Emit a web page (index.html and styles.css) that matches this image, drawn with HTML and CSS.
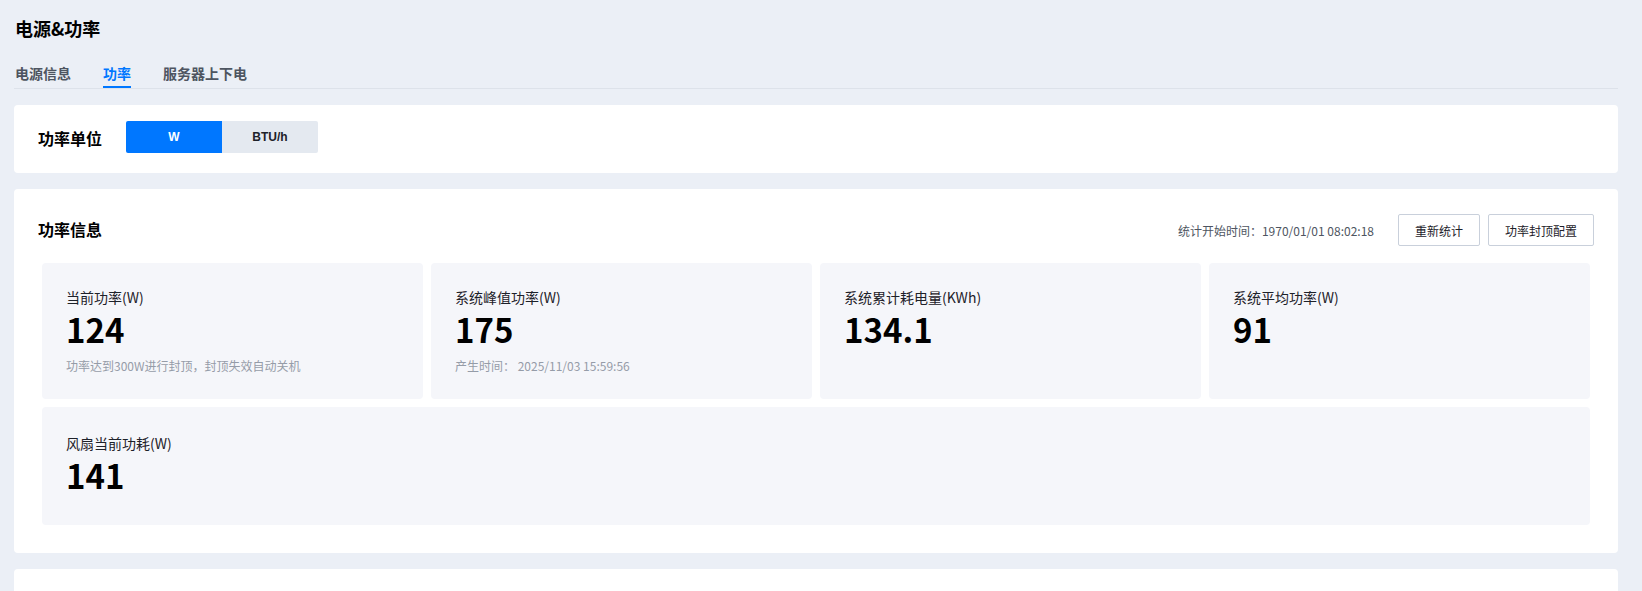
FILE: index.html
```html
<!DOCTYPE html>
<html lang="zh-CN">
<head>
<meta charset="utf-8">
<title>电源&amp;功率</title>
<link rel="stylesheet" href="styles.css">
</head>
<body>
<div class="page">
  <h1 class="page-title">电源&amp;功率</h1>
  <div class="tabs">
    <div class="tab">电源信息</div>
    <div class="tab active">功率</div>
    <div class="tab">服务器上下电</div>
  </div>

  <section class="card unit-card">
    <div class="unit-label">功率单位</div>
    <div class="segmented">
      <div class="seg active">W</div>
      <div class="seg">BTU/h</div>
    </div>
  </section>

  <section class="card info-card">
    <div class="info-header">
      <div class="info-title">功率信息</div>
      <div class="info-actions">
        <span class="stat-time">统计开始时间：1970/01/01 08:02:18</span>
        <button class="btn">重新统计</button>
        <button class="btn">功率封顶配置</button>
      </div>
    </div>
    <div class="stats">
      <div class="stat">
        <div class="stat-label">当前功率(W)</div>
        <div class="stat-value">124</div>
        <div class="stat-sub">功率达到300W进行封顶，封顶失效自动关机</div>
      </div>
      <div class="stat">
        <div class="stat-label">系统峰值功率(W)</div>
        <div class="stat-value">175</div>
        <div class="stat-sub">产生时间：&nbsp;2025/11/03 15:59:56</div>
      </div>
      <div class="stat">
        <div class="stat-label">系统累计耗电量(KWh)</div>
        <div class="stat-value">134.1</div>
      </div>
      <div class="stat">
        <div class="stat-label">系统平均功率(W)</div>
        <div class="stat-value">91</div>
      </div>
      <div class="stat stat-wide">
        <div class="stat-label">风扇当前功耗(W)</div>
        <div class="stat-value">141</div>
      </div>
    </div>
  </section>

  <section class="card next-card"></section>
</div>
</body>
</html>
```

FILE: styles.css
```css
* { box-sizing: border-box; }
html, body {
  margin: 0;
  padding: 0;
  background: #ebeff6;
  height: 100%;
  overflow: hidden;
}
body {
  font-family: "Noto Sans CJK SC", "Noto Sans", sans-serif;
  color: #1d2129;
}
.page {
  padding: 15px 24px 0 14px;
}
.page-title {
  margin: 0 0 0 1px;
  font-size: 18px;
  line-height: 26px;
  font-weight: 700;
  color: #000;
}
.tabs {
  display: flex;
  gap: 32px;
  margin-top: 21px;
  border-bottom: 1px solid #dde2ea;
  padding-left: 1px;
}
.tab {
  font-size: 14px;
  line-height: 22px;
  font-weight: 700;
  color: #4e5561;
  padding-bottom: 2px;
  border-bottom: 2px solid transparent;
}
.tab.active {
  color: #0077ff;
  border-bottom-color: #0077ff;
}
.card {
  background: #fff;
  border-radius: 4px;
  margin-top: 16px;
}
.unit-card {
  display: flex;
  align-items: center;
  padding: 16px 24px 20px;
  height: 68px;
}
.unit-label {
  font-size: 16px;
  font-weight: 700;
  color: #000;
  width: 64px;
  margin-right: 24px;
  margin-top: 2px;
}
.segmented {
  display: flex;
}
.seg {
  width: 96px;
  height: 32px;
  display: flex;
  align-items: center;
  justify-content: center;
  font-size: 12px;
  font-weight: 700;
  font-family: "Liberation Sans", "Noto Sans", sans-serif;
  background: #e4e9f0;
  color: #1d2129;
}
.seg:first-child { border-radius: 2px 0 0 2px; }
.seg:last-child { border-radius: 0 2px 2px 0; }
.seg.active {
  background: #0077ff;
  color: #fff;
}
.info-card {
  padding: 25px 28px 28px 28px;
}
.info-header {
  display: flex;
  align-items: center;
  justify-content: space-between;
  height: 32px;
  margin: 0 -4px 17px -4px;
}
.info-title {
  font-size: 16px;
  font-weight: 700;
  color: #000;
  margin-top: -2px;
}
.info-actions {
  display: flex;
  align-items: center;
  gap: 8px;
}
.stat-time {
  font-size: 12px;
  color: #4e5561;
  margin-right: 16px;
}
.btn {
  height: 32px;
  padding: 0 16px;
  font-family: "Noto Sans CJK SC", "Noto Sans", sans-serif;
  font-size: 12px;
  color: #1d2129;
  background: #fff;
  border: 1px solid #c9d0db;
  border-radius: 2px;
}
.stats {
  display: grid;
  grid-template-columns: repeat(4, 1fr);
  gap: 8px;
}
.stat {
  background: #f5f6fa;
  border-radius: 4px;
  padding: 24px 24px 23px;
}
.stat-wide {
  grid-column: 1 / -1;
  padding-top: 26px;
  min-height: 118px;
}
.stat-label {
  font-size: 14px;
  line-height: 20px;
  color: #1d2129;
}
.stat-value {
  font-size: 33px;
  line-height: 40px;
  font-weight: 700;
  color: #000;
  margin-top: 2px;
}
.stat-sub {
  font-size: 12px;
  line-height: 20px;
  color: #959ca8;
  margin-top: 7px;
}
.next-card {
  height: 60px;
}
```
